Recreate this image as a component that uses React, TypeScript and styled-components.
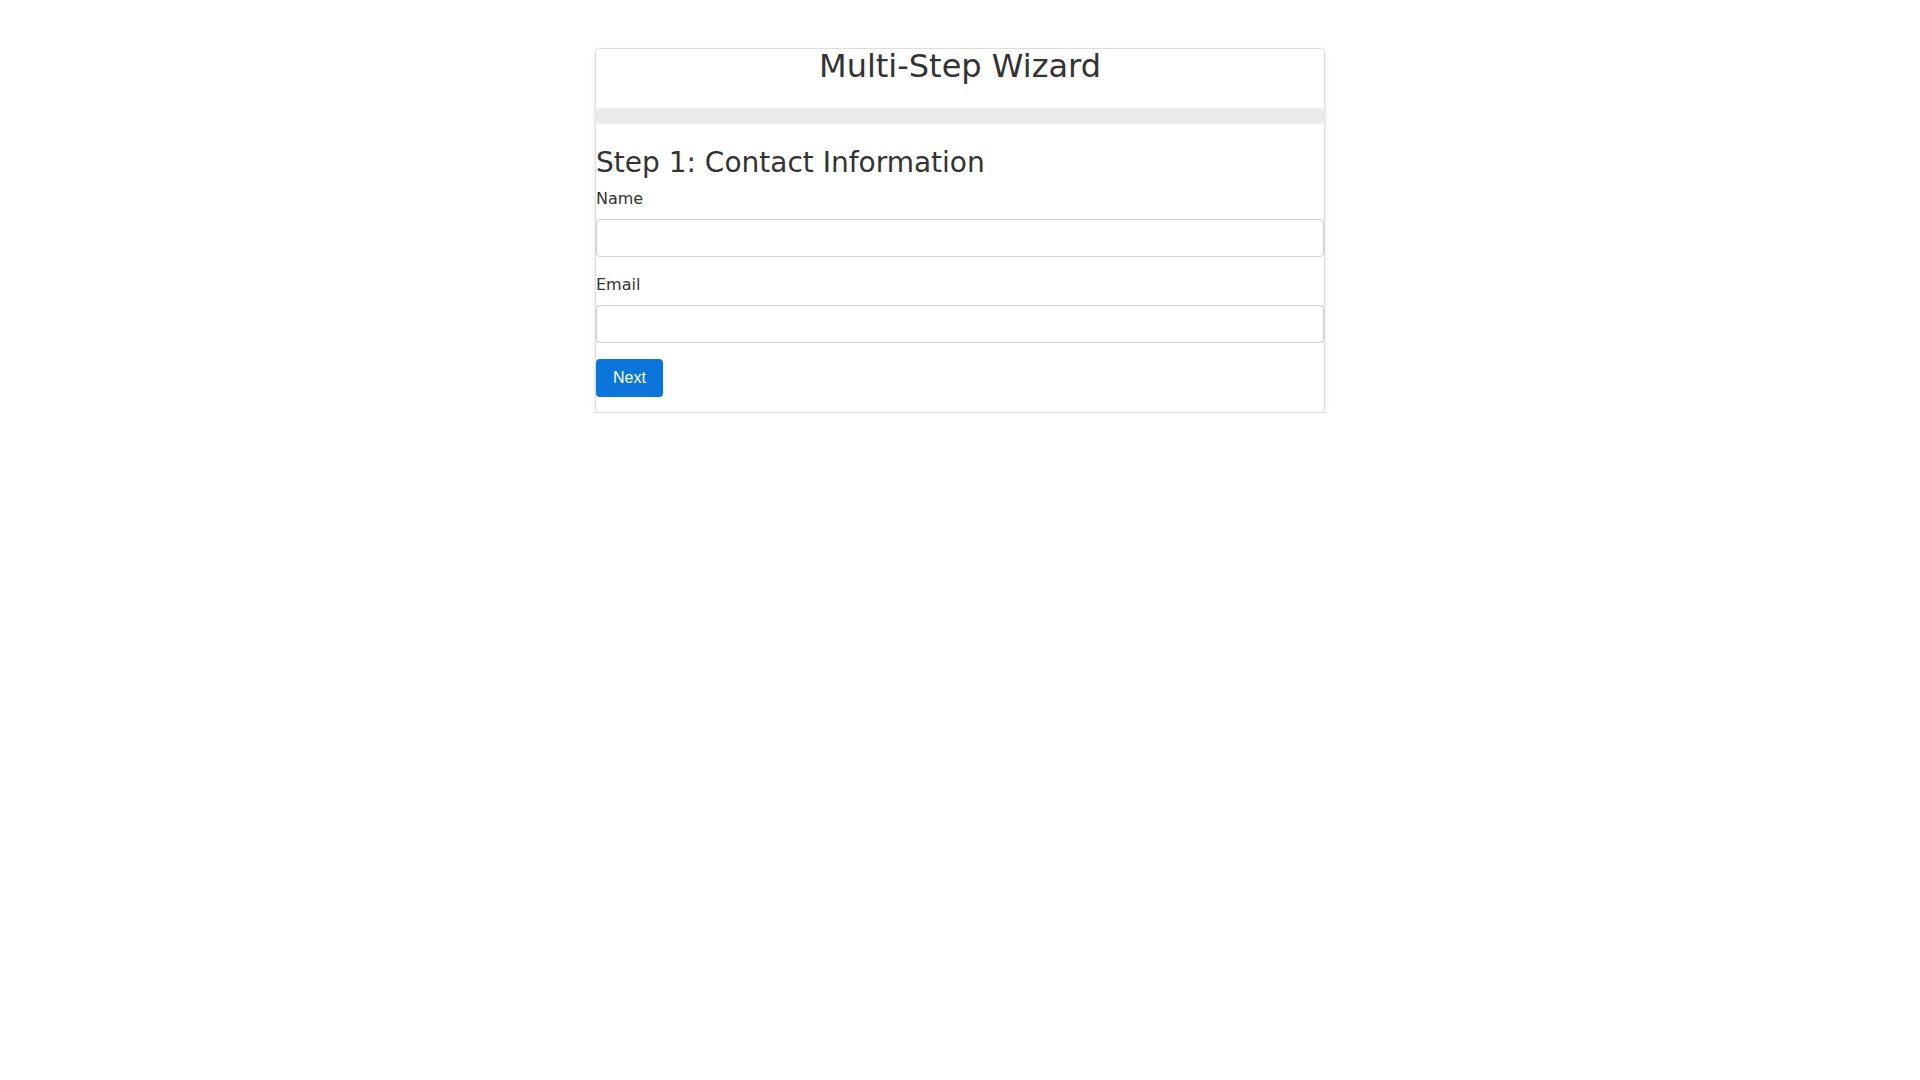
import { useState } from "react";
import styled, { createGlobalStyle } from "styled-components";

const GlobalStyle = createGlobalStyle`
    body {
        margin: 8px;
        background: #ffffff;
        font-family: "DejaVu Sans", sans-serif;
        color: #333333;
    }
`;

const steps = ["Contact Information", "Address", "Confirmation"];

const App = () => {
    const [step, setStep] = useState(0);
    const [name, setName] = useState("");
    const [email, setEmail] = useState("");

    // 진행률
    const progress = (step / steps.length) * 100;

    return (
        <>
            <GlobalStyle />
            <Card>
                <Title>Multi-Step Wizard</Title>
                <ProgressTrack>
                    <ProgressFill style={{ width: `${progress}%` }} />
                </ProgressTrack>
                <StepTitle>
                    Step {step + 1}: {steps[step]}
                </StepTitle>
                <Field $gap={18}>
                    <Label htmlFor="name">Name</Label>
                    <Input
                        id="name"
                        value={name}
                        onChange={e => setName(e.target.value)}
                    />
                </Field>
                <Field $gap={16}>
                    <Label htmlFor="email">Email</Label>
                    <Input
                        id="email"
                        type="email"
                        value={email}
                        onChange={e => setEmail(e.target.value)}
                    />
                </Field>
                <ButtonRow>
                    <NextButton
                        onClick={() =>
                            setStep(s => Math.min(s + 1, steps.length - 1))
                        }
                    >
                        Next
                    </NextButton>
                </ButtonRow>
            </Card>
        </>
    );
};

const Card = styled.div`
    box-sizing: border-box;
    width: 730px;
    margin: 40px auto 0;
    padding-bottom: 15px;
    border: 1px solid #dcdcdc;
    border-radius: 4px;
    background: #fff;
    box-shadow: 0 2px 5px rgba(0, 0, 0, 0.1);
`;

const Title = styled.h1`
    margin: 0;
    font-size: 32px;
    line-height: 34px;
    font-weight: 400;
    text-align: center;
    color: #333;
`;

const ProgressTrack = styled.div`
    margin-top: 25px;
    height: 16px;
    border-radius: 4px;
    background: #ebebeb;
    overflow: hidden;
`;

const ProgressFill = styled.div`
    height: 100%;
    background: #0a75db;
`;

const StepTitle = styled.h2`
    margin: 22px 0 10px;
    font-size: 28px;
    font-weight: 400;
    color: #333;
`;

const Field = styled.div<{ $gap: number }>`
    display: flex;
    flex-direction: column;
    margin-bottom: ${p => p.$gap}px;
`;

const Label = styled.label`
    display: block;
    margin-bottom: 11px;
    font-size: 16px;
    color: #333;
`;

const Input = styled.input`
    box-sizing: border-box;
    width: 100%;
    height: 38px;
    padding: 0 10px;
    border: 1px solid #d0d0d0;
    border-radius: 4px;
    font-family: "DejaVu Sans", sans-serif;
    font-size: 16px;
    outline: none;
`;

const ButtonRow = styled.div`
    display: flex;
`;

const NextButton = styled.button`
    height: 38px;
    padding: 0 17px;
    border: none;
    border-radius: 4px;
    background: #0a75db;
    color: #ffffff;
    font-family: "Liberation Sans", Arial, sans-serif;
    font-size: 16px;
    cursor: pointer;
`;

export default App;
